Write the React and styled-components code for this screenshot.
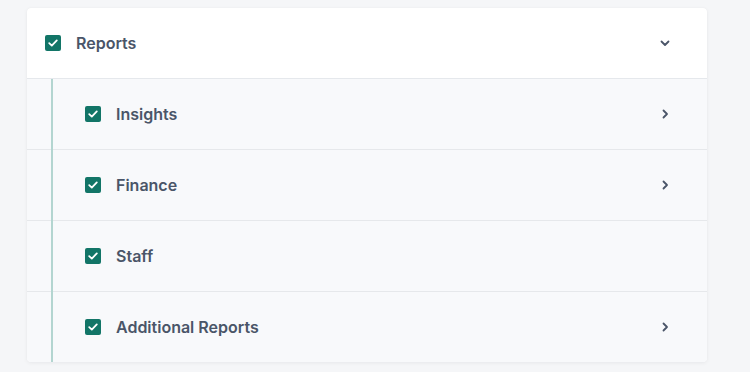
import React from "react";
import styled, { createGlobalStyle } from "styled-components";

const Global = createGlobalStyle`
  html, body { margin: 0; padding: 0; background: #f5f6f8; }
  body { font-family: Inter, "Noto Sans", sans-serif; }
`;

const Page = styled.div`
  padding: 8px 43px 10px 27px;
`;

const Card = styled.div`
  background: #ffffff;
  border-radius: 4px;
  box-shadow: 0 1px 4px rgba(15, 23, 42, 0.06), 0 0 1px rgba(15, 23, 42, 0.06);
  overflow: hidden;
`;

const Header = styled.div`
  height: 70px;
  display: flex;
  align-items: center;
  padding: 0 36px 0 18px;
  border-bottom: 1px solid #e5e8ec;
`;

const Children = styled.div`
  position: relative;
  background: #f8f9fb;
  &::before {
    content: "";
    position: absolute;
    left: 24px;
    top: 0;
    bottom: 0;
    width: 2px;
    background: #b3d5d0;
  }
`;

const Row = styled.div`
  height: 70px;
  display: flex;
  align-items: center;
  padding: 0 36px 0 58px;
  & + & { border-top: 1px solid #e6e8eb; }
`;

const Box = styled.span`
  width: 16px;
  height: 16px;
  border-radius: 2px;
  background: #127567;
  display: inline-flex;
  align-items: center;
  justify-content: center;
  flex: none;
`;

const Label = styled.span`
  margin-left: 15px;
  font-size: 16px;
  font-weight: 600;
  color: #4a5568;
  flex: 1;
`;

const Chev = styled.svg`
  width: 12px;
  height: 12px;
  flex: none;
`;

const Check = () => (
  <Box>
    <svg width="12" height="12" viewBox="0 0 12 12">
      <path d="M2.2 6.2 L4.8 8.6 L9.8 3.4" fill="none" stroke="#fff" strokeWidth="1.8" strokeLinecap="round" strokeLinejoin="round" />
    </svg>
  </Box>
);

const Down = () => (
  <Chev viewBox="0 0 12 12">
    <path d="M2.5 4.5 L6 8 L9.5 4.5" fill="none" stroke="#4a5568" strokeWidth="1.8" strokeLinecap="round" strokeLinejoin="round" />
  </Chev>
);
const Right = () => (
  <Chev viewBox="0 0 12 12">
    <path d="M4.5 2.5 L8 6 L4.5 9.5" fill="none" stroke="#4a5568" strokeWidth="1.8" strokeLinecap="round" strokeLinejoin="round" />
  </Chev>
);

const items = [
  { label: "Insights", more: true },
  { label: "Finance", more: true },
  { label: "Staff", more: false },
  { label: "Additional Reports", more: true },
];

export default function App() {
  return (
    <>
      <Global />
      <Page>
        <Card>
          <Header>
            <Check />
            <Label>Reports</Label>
            <Down />
          </Header>
          <Children>
            {items.map((it) => (
              <Row key={it.label}>
                <Check />
                <Label>{it.label}</Label>
                {it.more && <Right />}
              </Row>
            ))}
          </Children>
        </Card>
      </Page>
    </>
  );
}
